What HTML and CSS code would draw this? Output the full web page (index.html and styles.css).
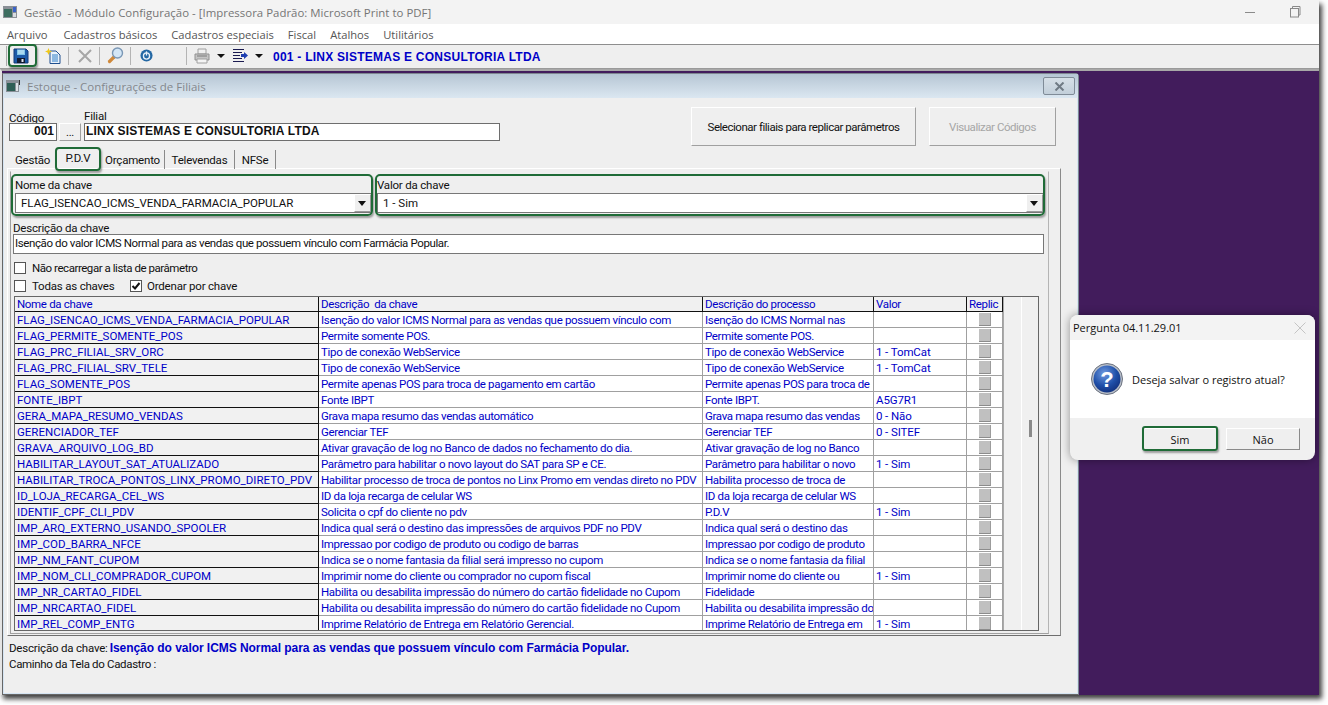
FILE: index.html
```html
<!DOCTYPE html>
<html lang="pt">
<head>
<meta charset="utf-8">
<title>Gestão - Módulo Configuração</title>
<link rel="stylesheet" href="styles.css">
</head>
<body>
<div class="app">
  <header class="titlebar">
    <svg class="appicon" width="16" height="16" viewBox="0 0 16 16"><rect x="1" y="2" width="14" height="12" fill="#8a8f96"/><rect x="2" y="5" width="8" height="8" fill="#3d6d5f"/><rect x="11" y="3" width="3" height="5" fill="#3a62c8"/><rect x="11" y="9" width="3" height="4" fill="#d8dce0"/></svg>
    <span class="titletext">Gestão&nbsp; - Módulo Configuração - [Impressora Padrão: Microsoft Print to PDF]</span>
    <span class="winbtns">
      <svg width="12" height="12" viewBox="0 0 12 12"><path d="M1 6.500H11" stroke="#8a8a8a" fill="none"/></svg>
      <svg width="12" height="12" viewBox="0 0 12 12"><rect x="1.500" y="2.500" width="8" height="8.500" fill="none" stroke="#8a8a8a"/><path d="M3.500 2.500V.5H11V9H9.500" fill="none" stroke="#8a8a8a"/></svg>
    </span>
  </header>
  <nav class="menubar">
    <span>Arquivo</span><span>Cadastros básicos</span><span>Cadastros especiais</span><span>Fiscal</span><span>Atalhos</span><span>Utilitários</span>
  </nav>
  <div class="toolbar">
    <span class="grip"></span>
    <span class="tool tool-save">
      <svg width="16" height="16" viewBox="0 0 16 16"><path d="M1 1H13L15 3V15H1Z" fill="#1c5aa8" stroke="#123a78"/><rect x="4" y="1.500" width="8" height="5.500" fill="#7fc4e8"/><path d="M5 3H11M5 5H11" stroke="#d6eef8"/><rect x="4" y="10" width="8" height="5" fill="#111a30"/><rect x="8.500" y="11" width="2" height="3" fill="#e4e8f0"/></svg>
      <span class="hl"></span>
    </span>
    <span class="tool tool-new">
      <svg width="16" height="16" viewBox="0 0 16 16"><path d="M5 3H11L15 7V15.500H5Z" fill="#e8f1fa" stroke="#1f4f8f"/><path d="M7 7H13M7 9H13M7 11H13M7 13H13" stroke="#2f7fc8"/><path d="M3.500 0L4.500 2.500L7 3.500L4.500 4.500L3.500 7L2.500 4.500L0 3.500L2.500 2.500Z" fill="#f0c818"/></svg>
    </span>
    <span class="sep sep-a"></span>
    <span class="tool tool-x">
      <svg width="14" height="14" viewBox="0 0 14 14"><path d="M1 1L13 13M13 1L1 13" stroke="#a6a6a6" stroke-width="2" fill="none"/></svg>
    </span>
    <span class="sep sep-b"></span>
    <span class="tool tool-find">
      <svg width="17" height="17" viewBox="0 0 17 17"><path d="M7 10L2.500 14.500" stroke="#d0893a" stroke-width="3.200" stroke-linecap="round"/><circle cx="10.500" cy="6" r="5" fill="#d3e6f6" stroke="#7a97b5" stroke-width="1.400"/></svg>
    </span>
    <span class="sep sep-c"></span>
    <span class="tool tool-power">
      <svg width="13" height="13" viewBox="0 0 14 14"><circle cx="7" cy="7" r="6.500" fill="#2468a4"/><circle cx="7" cy="7.500" r="3.300" fill="none" stroke="#e8f0f8" stroke-width="1.400"/><path d="M7 2.500V7" stroke="#e8f0f8" stroke-width="1.400"/></svg>
    </span>
    <span class="sep sep-d"></span>
    <span class="tool tool-print">
      <svg width="16" height="16" viewBox="0 0 16 16"><path d="M4 1H12V6H4Z" fill="#f0f0f0" stroke="#a0a0a0"/><path d="M1 6H15V12H1Z" fill="#c4c4c4" stroke="#909090"/><path d="M3 11H13V15H3Z" fill="#f4f4f4" stroke="#a0a0a0"/><path d="M3 8H13" stroke="#7a7a7a"/></svg>
    </span>
    <span class="caret caret-a"></span>
    <span class="tool tool-list">
      <svg width="15" height="13" viewBox="0 0 15 13"><path d="M0 .5H11M0 3.500H9M0 6.500H7M0 9.500H9M0 12.500H11" stroke="#1a1a50" fill="none"/><path d="M8 5H11V3L15 6.500L11 10V8H8Z" fill="#1f3fb0"/></svg>
    </span>
    <span class="caret caret-b"></span>
    <strong class="company">001 - LINX SISTEMAS E CONSULTORIA LTDA</strong>
  </div>
  <main class="mdi">
    <section class="window">
      <header class="win-title">
        <svg width="15" height="14" viewBox="0 0 15 14"><rect x="0" y="1" width="13" height="12" fill="#8a9097"/><rect x="1" y="4" width="8" height="8" fill="#2f5f55"/><rect x="10" y="4" width="2" height="8" fill="#dfe3e6"/><rect x="13" y="1" width="1" height="5" fill="#333"/></svg>
        <span>Estoque - Configurações de Filiais</span>
        <button class="win-close" type="button" aria-label="Fechar">
          <svg width="11" height="9" viewBox="0 0 11 9"><path d="M1.500 .5L9.500 8.500M9.500 .5L1.500 8.500" stroke="#6f7a84" stroke-width="2" fill="none"/></svg>
        </button>
      </header>
      <div class="win-body">
        <div class="head">
          <div class="field field-cod"><label>Código</label><div class="input num">001</div></div>
          <div class="dots">...</div>
          <div class="field field-fil"><label>Filial</label><div class="input bold">LINX SISTEMAS E CONSULTORIA LTDA</div></div>
          <button class="btn btn-rep" type="button">Selecionar filiais para replicar parâmetros</button>
          <button class="btn btn-vis" type="button">Visualizar Códigos</button>
        </div>
        <div class="tabs">
          <span class="tab tab-g">Gestão</span>
          <span class="tab tab-p">P.D.V<span class="hl"></span></span>
          <span class="tab tab-o">Orçamento</span>
          <span class="tab tab-t">Televendas</span>
          <span class="tab tab-n">NFSe</span>
        </div>
        <div class="panel">
          <div class="page">
            <div class="keys">
              <div class="key key-a">
                <label>Nome da chave</label>
                <div class="combo"><span>FLAG_ISENCAO_ICMS_VENDA_FARMACIA_POPULAR</span><i class="drop"></i></div>
                <span class="hl"></span>
              </div>
              <div class="key key-b">
                <label>Valor da chave</label>
                <div class="combo"><span>1 - Sim</span><i class="drop"></i></div>
                <span class="hl"></span>
              </div>
            </div>
            <label class="desc-label">Descrição da chave</label>
            <div class="desc-input">Isenção do valor ICMS Normal para as vendas que possuem vínculo com Farmácia Popular.</div>
            <div class="checks checks-1"><span class="check"></span><span>Não recarregar a lista de parâmetro</span></div>
            <div class="checks checks-2">
              <span class="check"></span><span class="lab-all">Todas as chaves</span>
              <span class="check on"><svg width="10" height="10" viewBox="0 0 10 10"><path d="M1.500 5L4 7.500L8.500 2" stroke="#111" stroke-width="2" fill="none"/></svg></span><span>Ordenar por chave</span>
            </div>
            <div class="grid-wrap">
              <table class="grid">
                <colgroup><col class="c1"><col class="c2"><col class="c3"><col class="c4"><col class="c5"></colgroup>
                <thead><tr><th>Nome da chave</th><th>Descrição&nbsp; da chave</th><th>Descrição do processo</th><th>Valor</th><th>Replic</th></tr></thead>
                <tbody>
                  <tr><td>FLAG_ISENCAO_ICMS_VENDA_FARMACIA_POPULAR</td><td>Isenção do valor ICMS Normal para as vendas que possuem vínculo com</td><td>Isenção do ICMS Normal nas</td><td></td><td><i class="box"></i></td></tr>
                  <tr><td>FLAG_PERMITE_SOMENTE_POS</td><td>Permite somente POS.</td><td>Permite somente POS.</td><td></td><td><i class="box"></i></td></tr>
                  <tr><td>FLAG_PRC_FILIAL_SRV_ORC</td><td>Tipo de conexão WebService</td><td>Tipo de conexão WebService</td><td>1 - TomCat</td><td><i class="box"></i></td></tr>
                  <tr><td>FLAG_PRC_FILIAL_SRV_TELE</td><td>Tipo de conexão WebService</td><td>Tipo de conexão WebService</td><td>1 - TomCat</td><td><i class="box"></i></td></tr>
                  <tr><td>FLAG_SOMENTE_POS</td><td>Permite apenas POS para troca de pagamento em cartão</td><td>Permite apenas POS para troca de</td><td></td><td><i class="box"></i></td></tr>
                  <tr><td>FONTE_IBPT</td><td>Fonte IBPT</td><td>Fonte IBPT.</td><td>A5G7R1</td><td><i class="box"></i></td></tr>
                  <tr><td>GERA_MAPA_RESUMO_VENDAS</td><td>Grava mapa resumo das vendas automático</td><td>Grava mapa resumo das vendas</td><td>0 - Não</td><td><i class="box"></i></td></tr>
                  <tr><td>GERENCIADOR_TEF</td><td>Gerenciar TEF</td><td>Gerenciar TEF</td><td>0 - SITEF</td><td><i class="box"></i></td></tr>
                  <tr><td>GRAVA_ARQUIVO_LOG_BD</td><td>Ativar gravação de log no Banco de dados no fechamento do dia.</td><td>Ativar gravação de log no Banco</td><td></td><td><i class="box"></i></td></tr>
                  <tr><td>HABILITAR_LAYOUT_SAT_ATUALIZADO</td><td>Parâmetro para habilitar o novo layout do SAT para SP e CE.</td><td>Parâmetro para habilitar o novo</td><td>1 - Sim</td><td><i class="box"></i></td></tr>
                  <tr><td>HABILITAR_TROCA_PONTOS_LINX_PROMO_DIRETO_PDV</td><td>Habilitar processo de troca de pontos no Linx Promo em vendas direto no PDV</td><td>Habilita processo de troca de</td><td></td><td><i class="box"></i></td></tr>
                  <tr><td>ID_LOJA_RECARGA_CEL_WS</td><td>ID da loja recarga de celular WS</td><td>ID da loja recarga de celular WS</td><td></td><td><i class="box"></i></td></tr>
                  <tr><td>IDENTIF_CPF_CLI_PDV</td><td>Solicita o cpf do cliente no pdv</td><td>P.D.V</td><td>1 - Sim</td><td><i class="box"></i></td></tr>
                  <tr><td>IMP_ARQ_EXTERNO_USANDO_SPOOLER</td><td>Indica qual será o destino das impressões de arquivos PDF no PDV</td><td>Indica qual será o destino das</td><td></td><td><i class="box"></i></td></tr>
                  <tr><td>IMP_COD_BARRA_NFCE</td><td>Impressao por codigo de produto ou codigo de barras</td><td>Impressao por codigo de produto</td><td></td><td><i class="box"></i></td></tr>
                  <tr><td>IMP_NM_FANT_CUPOM</td><td>Indica se o nome fantasia da filial será impresso no cupom</td><td>Indica se o nome fantasia da filial</td><td></td><td><i class="box"></i></td></tr>
                  <tr><td>IMP_NOM_CLI_COMPRADOR_CUPOM</td><td>Imprimir nome do cliente ou comprador no cupom fiscal</td><td>Imprimir nome do cliente ou</td><td>1 - Sim</td><td><i class="box"></i></td></tr>
                  <tr><td>IMP_NR_CARTAO_FIDEL</td><td>Habilita ou desabilita impressão do número do cartão fidelidade no Cupom</td><td>Fidelidade</td><td></td><td><i class="box"></i></td></tr>
                  <tr><td>IMP_NRCARTAO_FIDEL</td><td>Habilita ou desabilita impressão do número do cartão fidelidade no Cupom</td><td>Habilita ou desabilita impressão do</td><td></td><td><i class="box"></i></td></tr>
                  <tr><td>IMP_REL_COMP_ENTG</td><td>Imprime Relatório de Entrega em Relatório Gerencial.</td><td>Imprime Relatório de Entrega em</td><td>1 - Sim</td><td><i class="box"></i></td></tr>
                </tbody>
              </table>
              <div class="scroll"><i class="thumb"></i></div>
            </div>
          </div>
        </div>
        <footer class="foot">
          <div><span>Descrição da chave:</span><strong>Isenção do valor ICMS Normal para as vendas que possuem vínculo com Farmácia Popular.</strong></div>
          <div class="path">Caminho da Tela do Cadastro :</div>
        </footer>
      </div>
    </section>
  </main>
</div>
<aside class="dialog">
  <header class="dlg-title"><span>Pergunta 04.11.29.01</span>
    <svg width="12" height="12" viewBox="0 0 12 12"><path d="M.5 .5L11.500 11.500M11.500 .5L.5 11.500" stroke="#c4c4c4" fill="none"/></svg>
  </header>
  <div class="dlg-body">
    <svg width="32" height="32" viewBox="0 0 32 32">
      <defs><radialGradient id="qb" cx="40%" cy="30%" r="75%"><stop offset="0" stop-color="#6f9be0"/><stop offset=".6" stop-color="#1f4fa8"/><stop offset="1" stop-color="#12307c"/></radialGradient></defs>
      <circle cx="16" cy="16" r="15.500" fill="#b9bfc8" stroke="#6b7280"/>
      <circle cx="16" cy="16" r="13.500" fill="url(#qb)"/>
      <text x="16" y="24" text-anchor="middle" class="qmark">?</text>
    </svg>
    <span>Deseja salvar o registro atual?</span>
  </div>
  <div class="dlg-actions">
    <button class="dlg-btn dlg-yes" type="button">Sim<span class="hl"></span></button>
    <button class="dlg-btn dlg-no" type="button">Não</button>
  </div>
</aside>
</body>
</html>
```

FILE: styles.css
```css
* { box-sizing: border-box; }
html, body { margin: 0; height: 100%; }
body {
  position: relative;
  width: 1328px;
  height: 705px;
  overflow: hidden;
  background: #fff;
  font-family: Roboto, "Liberation Sans", Arial, sans-serif;
  font-size: 11.500px;
  letter-spacing: -.2px;
  color: #111;
}
label { display: block; }
button { font: inherit; letter-spacing: inherit; color: inherit; padding: 0; }

.hl {
  position: absolute;
  border: 2px solid #1f6b37;
  border-radius: 4px;
  box-shadow: 1px 2px 2px rgba(0,0,0,.35);
  pointer-events: none;
}

.app {
  width: 1319px;
  height: 695px;
  display: flex;
  flex-direction: column;
  box-shadow: 3px 4px 5px rgba(0,0,0,.75);
}

.titlebar {
  height: 24px;
  flex: none;
  background: #f3f3f3;
  display: flex;
  align-items: center;
  padding-left: 2px;
  color: #757575;
  font-family: "Open Sans", "Liberation Sans", sans-serif;
  font-size: 11.400px;
  letter-spacing: 0;
}
.titletext { margin-left: 6px; letter-spacing: .03px; }
.winbtns { margin-left: auto; display: flex; gap: 33px; padding-right: 18px; }

.menubar {
  height: 21px;
  flex: none;
  background: #fff;
  border-bottom: 1px solid #8e8e8e;
  display: flex;
  align-items: center;
  gap: 14px;
  padding-left: 7px;
  color: #555;
  font-family: "Open Sans", "Liberation Sans", sans-serif;
  font-size: 11.200px;
  letter-spacing: 0;
}
.menubar span:first-child { margin-right: 2px; }

.toolbar {
  height: 24px;
  flex: none;
  background: #efefef;
  border-bottom: 1px solid #9a9a9a;
  display: flex;
  align-items: center;
  padding: 0 0 2px 6px;
}
.grip { width: 1px; height: 20px; background: #aaa; }
.tool { position: relative; display: flex; align-items: center; justify-content: center; }
.tool-save { margin-left: 6px; }
.tool-save .hl { left: -5px; right: -8px; top: -4px; bottom: -3px; }
.tool-new { margin-left: 16px; }
.sep { width: 1px; height: 18px; background: #b4b4b4; }
.sep-a { margin-left: 7px; }
.tool-x { margin-left: 9px; }
.sep-b { margin-left: 7px; }
.tool-find { margin-left: 7px; }
.sep-c { margin-left: 6px; }
.tool-power { margin-left: 9px; }
.sep-d { margin-left: 33px; }
.tool-print { margin-left: 7px; }
.caret { width: 0; height: 0; border: 4px solid transparent; border-top: 4px solid #111; border-bottom: 0; }
.caret-a { margin-left: 7px; }
.tool-list { margin-left: 8px; }
.caret-b { margin-left: 7px; }
.company {
  margin: 3px 0 0 10px;
  color: #0000c8;
  font-family: "Liberation Sans", sans-serif;
  font-size: 12px;
  letter-spacing: .25px;
}

.mdi {
  flex: 1;
  position: relative;
  background: #421c5c;
  border-top: 2px solid #a8a8a8;
  border-left: 2px solid #e4e4e4;
}

.window {
  position: absolute;
  left: 0;
  top: 2px;
  width: 1077px;
  height: 622px;
  background: #efefef;
  border: 1px solid #666;
  border-top-color: #7d8790;
  border-right-color: #7d8790;
  border-top-right-radius: 4px;
  box-shadow: inset 0 0 0 1px #d5e4f2;
  display: flex;
  flex-direction: column;
}
.win-title {
  height: 24px;
  flex: none;
  background: linear-gradient(#b6c6d4, #dbe7f1);
  display: flex;
  align-items: center;
  padding-left: 3px;
  color: #84888d;
  font-family: "Open Sans", "Liberation Sans", sans-serif;
  font-size: 11.500px;
  letter-spacing: 0;
}
.win-title span { margin-left: 6px; }
.win-close {
  margin-left: auto;
  margin-right: 3px;
  width: 32px;
  height: 18px;
  background: linear-gradient(#d6dfe7, #c2cfda);
  border: 1px solid #7f8b97;
  border-radius: 2px;
  display: flex;
  align-items: center;
  justify-content: center;
}
.win-body { flex: 1; display: flex; flex-direction: column; min-height: 0; }

.head {
  height: 52px;
  flex: none;
  display: flex;
  align-items: flex-start;
  padding-left: 6px;
}
.field { height: 43px; display: flex; flex-direction: column; justify-content: flex-end; }
.field label { line-height: 12px; }
.field-cod { width: 48px; }
.field-cod label { margin-bottom: -1px; }
.field-fil { width: 416px; margin-left: 3px; }
.field-fil label { margin-bottom: 1px; }
.input {
  height: 18px;
  background: #fff;
  border: 1px solid #6e6e6e;
  line-height: 15px;
  padding-left: 1px;
  white-space: nowrap;
  overflow: hidden;
  font-family: "Liberation Sans", sans-serif;
  font-size: 12px;
  letter-spacing: 0;
}
.num { text-align: right; padding-right: 2px; font-weight: 700; }
.bold { font-weight: 700; letter-spacing: .19px; }
.dots {
  width: 22px;
  height: 18px;
  margin: 25px 0 0 2px;
  background: #efefef;
  border: 1px solid;
  border-color: #fff #a0a0a0 #a0a0a0 #fff;
  text-align: center;
  line-height: 17px;
  font-size: 11px;
}
.btn {
  height: 39px;
  margin-top: 9px;
  background: #efefef;
  border: 1px solid;
  border-color: #fff #a0a0a0 #a0a0a0 #fff;
  white-space: nowrap;
  letter-spacing: -.47px;
}
.btn-rep { width: 225px; margin-left: 191px; }
.btn-vis { width: 127px; margin-left: 13px; color: #a6a6a6; }

.tabs { height: 19px; flex: none; display: flex; padding-left: 7px; position: relative; }
.tab {
  position: relative;
  padding-top: 3px;
  text-align: center;
  border-right: 1px solid #8a8a8a;
  height: 19px;
}
.tab-g { width: 45px; border-right: 0; }
.tab-p { width: 46px; border-right: 0; padding-top: 1px; }
.tab-p .hl { inset: -3px 0 -2px 0; }
.tab-o { width: 64px; }
.tab-t { width: 70px; }
.tab-n { width: 41px; }

.panel {
  margin-left: 4px;
  width: 1054px;
  height: 468px;
  flex: none;
  border: 1px solid;
  border-color: #fff #8a8a8a #6e6e6e #fff;
  padding: 2px 11px 1px 2px;
  margin-top: -1px;
}
.page {
  height: 100%;
  border: 1px solid #a0a0a0;
  border-top-color: transparent;
  border-right-color: #b4b4b4;
  padding: 0 1px;
  display: flex;
  flex-direction: column;
}

.keys { display: flex; height: 41px; margin-top: 6px; padding-left: 3px; flex: none; }
.key { position: relative; display: flex; flex-direction: column; justify-content: flex-end; height: 35px; }
.key label { line-height: 14px; margin-bottom: 1px; }
.key-a { width: 357px; }
.key-b { width: 667px; margin-left: 5px; }
.key-a .hl { inset: -4px -1px -3px -4px; border-radius: 5px; }
.key-b .hl { inset: -4px -1px -3px -2px; border-radius: 5px; }
.combo {
  height: 20px;
  background: #fff;
  border: 1px solid #777;
  display: flex;
  align-items: center;
  padding-left: 5px;
  white-space: nowrap;
  letter-spacing: 0;
}
.drop {
  margin-left: auto;
  width: 17px;
  height: 18px;
  background: #efefef;
  position: relative;
  border: 1px solid;
  border-color: #fff #999 #999 #fff;
}
.drop::after {
  content: "";
  position: absolute;
  left: 3px;
  top: 6px;
  border: 4px solid transparent;
  border-top: 5px solid #111;
  border-bottom: 0;
}

.desc-label { line-height: 12px; margin-top: 3px; flex: none; padding-left: 1px; }
.desc-input {
  height: 20px;
  flex: none;
  margin-left: 1px;
  margin-right: 3px;
  background: #fff;
  border: 1px solid #777;
  line-height: 17px;
  padding-left: 1px;
  white-space: nowrap;
  letter-spacing: -.39px;
}
.checks { display: flex; align-items: center; height: 12px; flex: none; padding-left: 2px; }
.checks-1 { margin-top: 8px; letter-spacing: -.45px; }
.checks-2 { margin-top: 6px; }
.check {
  width: 12px;
  height: 12px;
  background: #fff;
  border: 1.500px solid #555;
  margin-right: 6px;
  display: flex;
  align-items: center;
  justify-content: center;
}
.lab-all { width: 98px; }
.check.on { margin-right: 5px; }

.grid-wrap {
  margin-top: 4px;
  margin-left: 2px;
  width: 1025px;
  height: 335px;
  flex: none;
  border: 1px solid #666;
  display: flex;
  overflow: hidden;
}
.grid {
  table-layout: fixed;
  width: 988px;
  flex: none;
  border-collapse: separate;
  border-spacing: 0;
  color: #0000c8;
  align-self: flex-start;
  letter-spacing: -.33px;
}
.c1 { width: 304px; }
.c2 { width: 384px; }
.c3 { width: 171px; }
.c4 { width: 93px; }
.c5 { width: 36px; }
.grid th, .grid td {
  height: 16px;
  padding: 0 0 0 2px;
  font-weight: 400;
  text-align: left;
  white-space: nowrap;
  overflow: hidden;
  line-height: 14px;
  border-right: 1px solid #a0a0a0;
  border-bottom: 1px solid #a0a0a0;
}
.grid th { height: 15px; background: #f0f0f0; border-bottom: 1px solid #111; border-right-color: #111; }
.grid td { background: #fff; }
.grid td:first-child { border-right-color: #111; border-bottom-color: #111; background: #f1f1f1; letter-spacing: 0; }
.grid td:nth-child(4) { letter-spacing: -.1px; }
.grid td:last-child { padding: 0; }
.box {
  display: block;
  width: 12px;
  height: 13px;
  margin: 0 auto;
  background: #c0c0c0;
  border-bottom: 1px solid #8c8c8c;
  border-right: 1px solid #9c9c9c;
}
.scroll { flex: 1; background: #f0f0f0; position: relative; border-left: 1px solid #aaa; }
.scroll::before { content: ""; position: absolute; left: 17px; top: 0; bottom: 0; width: 1px; background: #fff; }
.thumb { position: absolute; left: 25px; top: 123px; width: 3px; height: 17px; background: #8a8a8a; }

.foot { padding: 4px 0 0 6px; line-height: 16px; }
.foot span { margin-right: 2px; }
.foot strong { color: #0000c8; font-family: "Liberation Sans", sans-serif; font-size: 12px; letter-spacing: -.05px; }
.path { letter-spacing: -.33px; }

.dialog {
  position: absolute;
  left: 1070px;
  top: 315px;
  width: 245px;
  height: 145px;
  background: #f0f0f0;
  border-radius: 8px;
  box-shadow: 0 0 10px rgba(0,0,0,.4);
  display: flex;
  flex-direction: column;
  overflow: visible;
  font-family: "Open Sans", "Liberation Sans", sans-serif;
  letter-spacing: 0;
}
.dlg-title {
  height: 25px;
  flex: none;
  display: flex;
  align-items: center;
  justify-content: space-between;
  padding: 0 9px 0 3px;
  background: #f3f3f3;
  border-radius: 8px 8px 0 0;
  font-size: 11px;
}
.dlg-body {
  height: 78px;
  flex: none;
  background: #fff;
  display: flex;
  align-items: center;
  gap: 9px;
  padding-left: 21px;
  font-size: 11px;
}
.qmark { fill: #fff; font-family: "Liberation Sans", sans-serif; font-weight: 700; font-size: 22px; }
.dlg-actions { flex: 1; position: relative; display: flex; padding: 10px 0 0 73px; gap: 9px; }
.dlg-btn {
  position: relative;
  width: 74px;
  height: 22px;
  background: #efefef;
  border: 1px solid;
  border-color: #fff #8a8a8a #8a8a8a #fff;
  font-size: 11px;
}
.dlg-yes .hl { inset: -3px -2px -2px -2px; border-radius: 3px; }
```
